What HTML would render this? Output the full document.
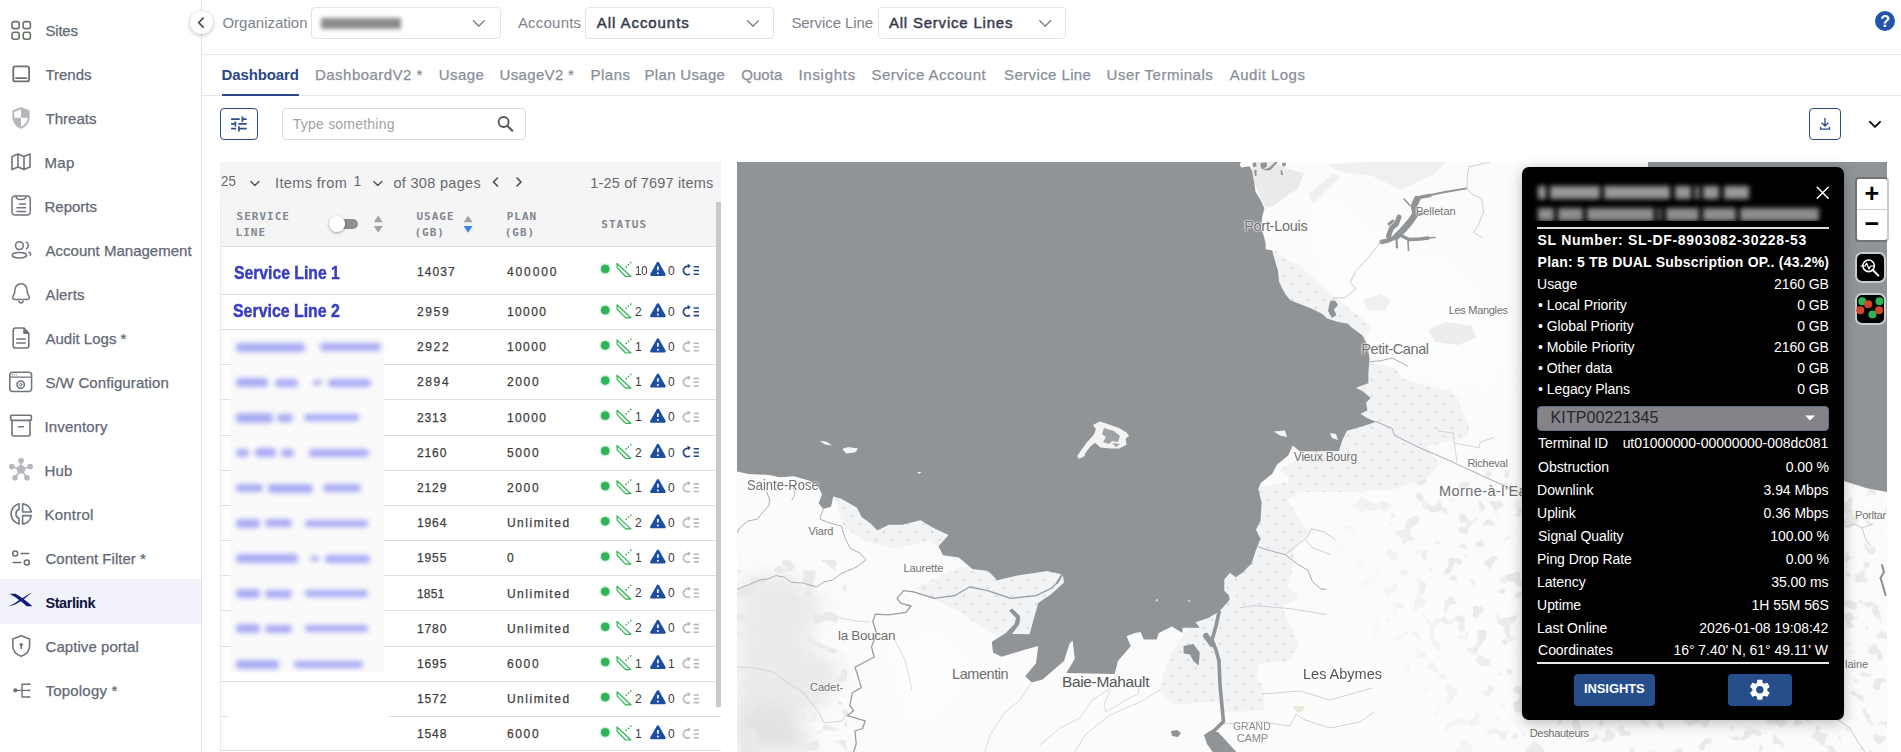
<!DOCTYPE html><html lang="en"><head><meta charset="utf-8"><title>Starlink Dashboard</title><style>
html,body{margin:0;padding:0}
body{width:1901px;height:752px;overflow:hidden;background:#fff;position:relative;font-family:"Liberation Sans",sans-serif}
.abs{position:absolute}
.t{position:absolute;white-space:nowrap}
.bx{position:absolute;box-sizing:border-box}
.map{position:absolute;left:737px;top:162px}
.m{-webkit-text-stroke:.25px currentColor}
.m2{-webkit-text-stroke:.45px currentColor}
.blur{position:absolute;white-space:nowrap;filter:blur(2.6px)}
</style></head><body>
<div class="bx" style="left:0.0px;top:579.2px;width:201.0px;height:44.4px;background:#f1f2f9"></div>
<div class="bx" style="left:201.0px;top:0.0px;width:1.0px;height:752.0px;background:#e4e4e8"></div>
<svg class="abs" style="left:0;top:0" width="60" height="752" viewBox="0 0 60 752" fill="none" stroke-linecap="round" stroke-linejoin="round"><rect x="12.0" y="21.6" width="7.2" height="7" rx="2.2" stroke="#6a7269" stroke-width="1.6"/><rect x="23.2" y="21.6" width="7.2" height="7" rx="2.2" stroke="#6a7269" stroke-width="1.6"/><rect x="12.0" y="32.2" width="7.2" height="7" rx="2.2" stroke="#6a7269" stroke-width="1.6"/><rect x="23.2" y="32.2" width="7.2" height="7" rx="2.2" stroke="#6a7269" stroke-width="1.6"/><rect x="13.3" y="66.4" width="15.8" height="15" rx="2" stroke="#6a7269" stroke-width="1.8"/><path d="M16 78.2h10.4" stroke="#6a7269" stroke-width="1.8"/><path d="M21 107l8.6 3.6v6.2c0 5.6-3.6 10.4-8.6 12-5-1.6-8.6-6.4-8.6-12v-6.2z" fill="#b5b7bd"/><path d="M21 109.2v8.6h-6.7v-5.8zM21 117.8h6.7c-.5 4-3 7.4-6.7 8.8z" fill="#fff"/><path d="M12 156.5l6-2.5 6 2.5 6-2.5v13l-6 2.5-6-2.5-6 2.5zM18 154v13M24 156.5v13" stroke="#70747d" stroke-width="1.6"/><path d="M16 196h-1.2a2.8 2.8 0 0 0-2.8 2.8v13.4a2.8 2.8 0 0 0 2.8 2.8h12.6a2.8 2.8 0 0 0 2.8-2.8v-13.4a2.8 2.8 0 0 0-2.8-2.8H26c0 2.4-2 3.6-5 3.6s-5-1.200-5-3.600zM16.500 196h9M19.500 204h6M17 207.800h8.500M17 211.600h8.500" stroke="#70747d" stroke-width="1.5"/><circle cx="19.4" cy="245.600" r="3.900" stroke="#70747d" stroke-width="1.500"/><ellipse cx="19.400" cy="255.200" rx="7.200" ry="2.700" stroke="#70747d" stroke-width="1.500"/><path d="M26.200 242.300c2.400.500 3.200 4.200.400 6.300M29 252.300c1.400.500 2 1.500 1.200 2.800" stroke="#70747d" stroke-width="1.500"/><path d="M21 283.800c-3.600 0-6 2.800-6 6.200 0 4-2.200 5.400-2.200 7.400 0 1.200 1 2 2.400 2h11.600c1.400 0 2.400-.800 2.400-2 0-2-2.200-3.400-2.200-7.400 0-3.400-2.400-6.200-6-6.200zM18.800 301.400c.5 1 1.200 1.500 2.200 1.500s1.700-.5 2.200-1.500" stroke="#70747d" stroke-width="1.500"/><path d="M24 328h-8.600a2.200 2.200 0 0 0-2.200 2.200v15.600a2.200 2.200 0 0 0 2.200 2.200h11.200a2.200 2.200 0 0 0 2.200-2.200V333.200zM24 328v5.200h4.800M16.800 339h8.400M16.800 343h8.400" stroke="#70747d" stroke-width="1.600"/><path d="M24 328l4.800 5.200H24z" fill="#70747d"/><rect x="9.800" y="372.200" width="21.800" height="19.400" rx="3" stroke="#70747d" stroke-width="1.500"/><path d="M9.800 377.200h21.800" stroke="#70747d" stroke-width="1.200"/><circle cx="20.700" cy="384.600" r="3.700" stroke="#70747d" stroke-width="1.500" stroke-dasharray="1.900 1"/><circle cx="20.700" cy="384.600" r="1.300" stroke="#70747d" stroke-width="1"/><path d="M12.500 374.700h.1M14.500 374.700h.1M16.500 374.700h.1" stroke="#70747d" stroke-width="1.100"/><rect x="10.600" y="415.200" width="20.800" height="5.200" rx="1.200" stroke="#70747d" stroke-width="1.600"/><path d="M12 420.400v13.600a2 2 0 0 0 2 2h14a2 2 0 0 0 2-2v-13.600M18.600 426.800h4.800" stroke="#70747d" stroke-width="1.600"/><g fill="#b5b7bd" stroke="#b5b7bd" stroke-width="1.600"><path d="M21 469.500V461M21 469.500l-9-3M21 469.500l9-3M21 469.500l-5.800 8M21 469.500l5.800 8"/><circle cx="21" cy="469.500" r="4.200" stroke="none"/><circle cx="21" cy="460.800" r="2.800" stroke="none"/><circle cx="11.800" cy="466.600" r="2.800" stroke="none"/><circle cx="30.200" cy="466.600" r="2.800" stroke="none"/><circle cx="15" cy="477.800" r="2.800" stroke="none"/><circle cx="27" cy="477.800" r="2.800" stroke="none"/></g><path d="M19 503.800a10.400 10.400 0 0 0 0 20.200v-5.500a5 5 0 0 1 0-9.200zM22.600 503.700v8.300h8.600a10.300 10.300 0 0 0-8.600-8.300zM22.600 515.600v8.500a10.300 10.300 0 0 0 8.600-8.500z" stroke="#70747d" stroke-width="1.600"/><circle cx="15.200" cy="553.400" r="2.500" stroke="#6a7269" stroke-width="1.500"/><path d="M21.200 553.400h7.600M13.200 562.400h7.600" stroke="#6a7269" stroke-width="1.500"/><circle cx="26.800" cy="562.400" r="2.500" stroke="#6a7269" stroke-width="1.500"/><path d="M9.600 593.800h5.800c4.600 2.200 11.600 7.700 16.900 12.400h-5.700c-4.600-4.200-11.600-9.700-17-12.400z" fill="#0e1a78"/><path d="M9.100 606.200c5.900-2.700 13.900-9.200 22.700-13.800-5.800 5.100-13.800 12.100-22.700 13.800z" fill="#0e1a78"/><path d="M21.200 635.800l8.400 3.200v6.400c0 5.200-3.400 9-8.400 10.800-5-1.800-8.400-5.600-8.400-10.800V639z" stroke="#70747d" stroke-width="1.600"/><circle cx="21.200" cy="644.600" r="1.700" fill="#70747d"/><path d="M21.200 645v3.800" stroke="#70747d" stroke-width="1.600"/><circle cx="15.300" cy="690.400" r="2.100" fill="#70747d"/><path d="M17 690.400h11.500M22 684.200v12.800h6.500M22 684.200h6.500" stroke="#70747d" stroke-width="1.400"/><circle cx="29.200" cy="684.200" r="1.100" fill="#70747d"/><circle cx="29.200" cy="690.400" r="1.100" fill="#70747d"/><circle cx="29.200" cy="697" r="1.100" fill="#70747d"/></svg>
<div class="bx" style="left:202.0px;top:54.0px;width:1699.0px;height:1.0px;background:#e6e6ea"></div>
<div class="bx" style="left:202.0px;top:95.0px;width:1699.0px;height:1.0px;background:#e6e6ea"></div>
<div class="bx" style="left:222.4px;top:94.0px;width:76.5px;height:2.0px;background:#2a4686"></div>
<div class="bx" style="left:311.2px;top:7.0px;width:189.4px;height:32.0px;border:1px solid #e3e3e7;border-radius:4px;background:#fff"></div>
<div class="bx" style="left:585.4px;top:7.0px;width:188.9px;height:32.0px;border:1px solid #e3e3e7;border-radius:4px;background:#fff"></div>
<div class="bx" style="left:877.6px;top:7.0px;width:188.9px;height:32.0px;border:1px solid #e3e3e7;border-radius:4px;background:#fff"></div>
<div class="abs" style="left:321px;top:17.500px;width:80px;height:11px;background:#8a8a8a;filter:blur(2.200px)"></div>
<div class="bx" style="left:190.0px;top:11.2px;width:23.0px;height:23.0px;border-radius:50%;background:#fff;box-shadow:0 1px 4px rgba(0,0,0,.28)"></div>
<div class="bx" style="left:1875.1px;top:11.1px;width:20.0px;height:20.0px;border-radius:50%;background:#2356a8"></div>
<span class="t" style="left:1880.2px;top:11.6px;font-size:16px;line-height:19px;font-weight:700;color:#fff">?</span>
<div class="bx" style="left:219.9px;top:108.4px;width:37.9px;height:31.3px;border:1px solid #2a4a8a;border-radius:4px"></div>
<div class="bx" style="left:282.4px;top:108.4px;width:243.4px;height:31.3px;border:1px solid #dedee2;border-radius:4px"></div>
<div class="bx" style="left:1809.2px;top:108.3px;width:31.6px;height:31.7px;border:1px solid #2a4a8a;border-radius:4px"></div>
<div class="bx" style="left:220.0px;top:162.0px;width:501.0px;height:41.2px;background:#f5f5f5"></div>
<div class="bx" style="left:220.0px;top:203.2px;width:496.0px;height:43.3px;background:#f5f5f5"></div>
<div class="bx" style="left:716.0px;top:202.0px;width:5.0px;height:505.4px;background:#c9c9c9"></div>
<div class="bx" style="left:220.0px;top:203.0px;width:1.0px;height:549.0px;background:#e9e9e9"></div>
<div class="bx" style="left:220.0px;top:246.0px;width:496.0px;height:1.0px;background:#dfdfdf"></div>
<div class="bx" style="left:220.0px;top:294.0px;width:496.0px;height:1.0px;background:#dfdfdf"></div>
<div class="bx" style="left:220.0px;top:329.0px;width:496.0px;height:1.0px;background:#dfdfdf"></div>
<div class="bx" style="left:220.0px;top:364.0px;width:496.0px;height:1.0px;background:#dfdfdf"></div>
<div class="bx" style="left:220.0px;top:399.0px;width:496.0px;height:1.0px;background:#dfdfdf"></div>
<div class="bx" style="left:220.0px;top:435.0px;width:496.0px;height:1.0px;background:#dfdfdf"></div>
<div class="bx" style="left:220.0px;top:470.0px;width:496.0px;height:1.0px;background:#dfdfdf"></div>
<div class="bx" style="left:220.0px;top:505.0px;width:496.0px;height:1.0px;background:#dfdfdf"></div>
<div class="bx" style="left:220.0px;top:540.0px;width:496.0px;height:1.0px;background:#dfdfdf"></div>
<div class="bx" style="left:220.0px;top:575.0px;width:496.0px;height:1.0px;background:#dfdfdf"></div>
<div class="bx" style="left:220.0px;top:610.0px;width:496.0px;height:1.0px;background:#dfdfdf"></div>
<div class="bx" style="left:220.0px;top:646.0px;width:496.0px;height:1.0px;background:#dfdfdf"></div>
<div class="bx" style="left:220.0px;top:681.0px;width:496.0px;height:1.0px;background:#dfdfdf"></div>
<div class="bx" style="left:220.0px;top:716.0px;width:501.0px;height:1.0px;background:#dfdfdf"></div>
<div class="bx" style="left:220.0px;top:750.0px;width:501.0px;height:1.0px;background:#dfdfdf"></div>
<div class="bx" style="left:231.0px;top:337.0px;width:153.0px;height:335.4px;background:#fafafa"></div>
<div class="bx" style="left:228.6px;top:682.5px;width:160.0px;height:67.0px;background:#fff"></div>
<div class="abs" style="left:236.0px;top:342.9px;width:69.4px;height:9px;background:#a9abf5;filter:blur(2.8px);border-radius:4px"></div>
<div class="abs" style="left:319.9px;top:343.4px;width:60.7px;height:8px;background:#a9abf5;filter:blur(2.8px);border-radius:4px"></div>
<div class="abs" style="left:236.0px;top:378.1px;width:32.3px;height:9px;background:#a9abf5;filter:blur(2.8px);border-radius:4px"></div>
<div class="abs" style="left:275.0px;top:378.6px;width:22.9px;height:8px;background:#a9abf5;filter:blur(2.8px);border-radius:4px"></div>
<div class="abs" style="left:312.7px;top:380.1px;width:9.4px;height:5px;background:#a9abf5;filter:blur(2.8px);border-radius:4px"></div>
<div class="abs" style="left:327.5px;top:378.6px;width:43.1px;height:8px;background:#a9abf5;filter:blur(2.8px);border-radius:4px"></div>
<div class="abs" style="left:236.0px;top:412.7px;width:36.8px;height:10px;background:#a9abf5;filter:blur(2.8px);border-radius:4px"></div>
<div class="abs" style="left:276.5px;top:413.7px;width:16.0px;height:8px;background:#a9abf5;filter:blur(2.8px);border-radius:4px"></div>
<div class="abs" style="left:303.5px;top:414.2px;width:55.2px;height:7px;background:#a9abf5;filter:blur(2.8px);border-radius:4px"></div>
<div class="abs" style="left:236.0px;top:448.9px;width:13.3px;height:8px;background:#a9abf5;filter:blur(2.8px);border-radius:4px"></div>
<div class="abs" style="left:254.6px;top:448.4px;width:21.2px;height:9px;background:#a9abf5;filter:blur(2.8px);border-radius:4px"></div>
<div class="abs" style="left:281.1px;top:448.9px;width:13.3px;height:8px;background:#a9abf5;filter:blur(2.8px);border-radius:4px"></div>
<div class="abs" style="left:308.9px;top:448.9px;width:59.7px;height:8px;background:#a9abf5;filter:blur(2.8px);border-radius:4px"></div>
<div class="abs" style="left:236.0px;top:484.1px;width:27.4px;height:8px;background:#a9abf5;filter:blur(2.8px);border-radius:4px"></div>
<div class="abs" style="left:268.4px;top:483.6px;width:44.9px;height:9px;background:#a9abf5;filter:blur(2.8px);border-radius:4px"></div>
<div class="abs" style="left:323.2px;top:484.1px;width:37.4px;height:8px;background:#a9abf5;filter:blur(2.8px);border-radius:4px"></div>
<div class="abs" style="left:236.0px;top:518.8px;width:23.8px;height:9px;background:#a9abf5;filter:blur(2.8px);border-radius:4px"></div>
<div class="abs" style="left:265.1px;top:519.3px;width:26.5px;height:8px;background:#a9abf5;filter:blur(2.8px);border-radius:4px"></div>
<div class="abs" style="left:304.8px;top:519.8px;width:63.6px;height:7px;background:#a9abf5;filter:blur(2.8px);border-radius:4px"></div>
<div class="abs" style="left:236.0px;top:554.0px;width:61.8px;height:9px;background:#a9abf5;filter:blur(2.8px);border-radius:4px"></div>
<div class="abs" style="left:309.9px;top:556.0px;width:9.4px;height:5px;background:#a9abf5;filter:blur(2.8px);border-radius:4px"></div>
<div class="abs" style="left:324.6px;top:554.5px;width:45.7px;height:8px;background:#a9abf5;filter:blur(2.8px);border-radius:4px"></div>
<div class="abs" style="left:236.0px;top:589.1px;width:23.8px;height:9px;background:#a9abf5;filter:blur(2.8px);border-radius:4px"></div>
<div class="abs" style="left:265.1px;top:589.6px;width:26.5px;height:8px;background:#a9abf5;filter:blur(2.8px);border-radius:4px"></div>
<div class="abs" style="left:304.8px;top:590.1px;width:63.6px;height:7px;background:#a9abf5;filter:blur(2.8px);border-radius:4px"></div>
<div class="abs" style="left:236.0px;top:624.3px;width:23.8px;height:9px;background:#a9abf5;filter:blur(2.8px);border-radius:4px"></div>
<div class="abs" style="left:265.1px;top:624.8px;width:26.5px;height:8px;background:#a9abf5;filter:blur(2.8px);border-radius:4px"></div>
<div class="abs" style="left:304.8px;top:625.3px;width:63.6px;height:7px;background:#a9abf5;filter:blur(2.8px);border-radius:4px"></div>
<div class="abs" style="left:236.0px;top:659.5px;width:43.0px;height:9px;background:#a9abf5;filter:blur(2.8px);border-radius:4px"></div>
<div class="abs" style="left:294.2px;top:660.5px;width:68.4px;height:7px;background:#a9abf5;filter:blur(2.8px);border-radius:4px"></div>
<div class="bx" style="left:336.0px;top:219.2px;width:22.0px;height:10.0px;background:#8e8e8e;border-radius:5px"></div>
<div class="bx" style="left:329.0px;top:216.4px;width:15.6px;height:15.6px;background:#fff;border-radius:50%;box-shadow:0 1px 3px rgba(0,0,0,.35)"></div>
<svg class="abs" style="left:0;top:0" width="1901" height="752" viewBox="0 0 1901 752"><defs><filter id="glow" x="-100%" y="-100%" width="300%" height="300%"><feGaussianBlur in="SourceGraphic" stdDeviation="1.3" result="b"/><feMerge><feMergeNode in="b"/><feMergeNode in="SourceGraphic"/></feMerge></filter></defs><path d="M203.2 18.2l-4.5 4.5l4.5 4.5" fill="none" stroke="#555" stroke-width="1.8" stroke-linecap="round" stroke-linejoin="round"/><path d="M473.3 20.6l5.5 5.5l5.5 -5.5" fill="none" stroke="#666" stroke-width="1.2" stroke-linecap="round" stroke-linejoin="round"/><path d="M747.5 20.6l5.5 5.5l5.5 -5.5" fill="none" stroke="#666" stroke-width="1.2" stroke-linecap="round" stroke-linejoin="round"/><path d="M1039.7 20.6l5.5 5.5l5.5 -5.5" fill="none" stroke="#666" stroke-width="1.2" stroke-linecap="round" stroke-linejoin="round"/><path d="M1870.0 121.9l5.0 5.0l5.0 -5.0" fill="none" stroke="#111" stroke-width="2" stroke-linecap="round" stroke-linejoin="round"/><path d="M250.9 181.5l4.0 4.0l4.0 -4.0" fill="none" stroke="#555" stroke-width="1.4" stroke-linecap="round" stroke-linejoin="round"/><path d="M373.8 181.5l4.0 4.0l4.0 -4.0" fill="none" stroke="#555" stroke-width="1.4" stroke-linecap="round" stroke-linejoin="round"/><path d="M497.5 178.0l-4.0 4.0l4.0 4.0" fill="none" stroke="#444" stroke-width="1.5" stroke-linecap="round" stroke-linejoin="round"/><path d="M517.0 178.0l4.0 4.0l-4.0 4.0" fill="none" stroke="#444" stroke-width="1.5" stroke-linecap="round" stroke-linejoin="round"/><path d="M231.100 119.100H239.700M242.400 116.400V121.900M242.400 119.100H246.700M231.100 123.900H235.400M235.400 121.400V126.400M238.400 123.900H246.700M231.100 128.700H236.100M238.900 126.200V131.400M238.900 128.700H246.700" stroke="#2f4f8f" stroke-width="1.700" fill="none"/><circle cx="503.600" cy="122" r="5" fill="none" stroke="#555" stroke-width="1.800"/><path d="M507.300 125.800l5 5" stroke="#555" stroke-width="2" stroke-linecap="round"/><path d="M1825 118.500v7M1822 123l3 3 3-3M1820.500 127.500v1.700h9v-1.700" stroke="#2a4a8a" stroke-width="1.300" fill="none" stroke-linecap="round" stroke-linejoin="round"/><path d="M373.7 222.300l4.500-6.800 4.500 6.800z" fill="#a3a3a3"/><path d="M373.7 226l4.500 6.800 4.500-6.800z" fill="#a3a3a3"/><path d="M463.6 222.300l4.500-6.800 4.500 6.800z" fill="#a3a3a3"/><path d="M463.6 226l4.500 6.800 4.500-6.800z" fill="#3c82f0"/><circle cx="605.2" cy="268.9" r="4.1" fill="#2fb356" filter="url(#glow)"/><path d="M617 263.5l.2 4.400 8.400 8.600h5.300z" fill="#f4fbf6" stroke="#2fb356" stroke-width="1.200" stroke-linejoin="round"/><path d="M625.700 267.4l6.700-6.100" stroke="#2fb356" stroke-width="1.500" stroke-dasharray="1.500 1.550"/><path d="M657.900 263.2l6.500 11.400h-13z" fill="#1d4ea0" stroke="#1d4ea0" stroke-width="2.600" stroke-linejoin="round"/><path d="M657.900 266.6v3.600" stroke="#fff" stroke-width="1.700"/><circle cx="657.900" cy="273.2" r="1" fill="#fff"/><path d="M690 273.9a4.200 4.200 0 1 1-1.200-7.400" fill="none" stroke="#27498a" stroke-width="1.700"/><path d="M687.400 263.5l3.500 2.200-2.700 2.600z" fill="#27498a"/><path d="M693.600 266.7h5.400M693.600 270.5h5.400M693.600 274.3h5.400" stroke="#27498a" stroke-width="1.600"/><circle cx="605.2" cy="310.2" r="4.1" fill="#2fb356" filter="url(#glow)"/><path d="M617 304.8l.2 4.400 8.400 8.600h5.300z" fill="#f4fbf6" stroke="#2fb356" stroke-width="1.200" stroke-linejoin="round"/><path d="M625.700 308.7l6.700-6.100" stroke="#2fb356" stroke-width="1.500" stroke-dasharray="1.500 1.550"/><path d="M657.900 304.5l6.500 11.400h-13z" fill="#1d4ea0" stroke="#1d4ea0" stroke-width="2.600" stroke-linejoin="round"/><path d="M657.900 307.9v3.600" stroke="#fff" stroke-width="1.700"/><circle cx="657.900" cy="314.5" r="1" fill="#fff"/><path d="M690 315.2a4.200 4.200 0 1 1-1.200-7.400" fill="none" stroke="#27498a" stroke-width="1.700"/><path d="M687.400 304.8l3.500 2.200-2.700 2.600z" fill="#27498a"/><path d="M693.600 308.0h5.400M693.600 311.8h5.400M693.600 315.6h5.400" stroke="#27498a" stroke-width="1.600"/><circle cx="605.2" cy="345.4" r="4.1" fill="#2fb356" filter="url(#glow)"/><path d="M617 340.0l.2 4.400 8.400 8.600h5.300z" fill="#f4fbf6" stroke="#2fb356" stroke-width="1.200" stroke-linejoin="round"/><path d="M625.700 343.9l6.700-6.100" stroke="#2fb356" stroke-width="1.500" stroke-dasharray="1.500 1.550"/><path d="M657.900 339.7l6.500 11.400h-13z" fill="#1d4ea0" stroke="#1d4ea0" stroke-width="2.600" stroke-linejoin="round"/><path d="M657.900 343.1v3.600" stroke="#fff" stroke-width="1.700"/><circle cx="657.900" cy="349.7" r="1" fill="#fff"/><path d="M690 350.4a4.200 4.200 0 1 1-1.200-7.400" fill="none" stroke="#b9b9b9" stroke-width="1.700"/><path d="M687.400 340.0l3.500 2.200-2.700 2.600z" fill="#b9b9b9"/><path d="M693.600 343.2h5.400M693.600 347.0h5.400M693.600 350.8h5.400" stroke="#b9b9b9" stroke-width="1.600"/><circle cx="605.2" cy="380.6" r="4.1" fill="#2fb356" filter="url(#glow)"/><path d="M617 375.2l.2 4.400 8.400 8.600h5.300z" fill="#f4fbf6" stroke="#2fb356" stroke-width="1.200" stroke-linejoin="round"/><path d="M625.700 379.1l6.700-6.100" stroke="#2fb356" stroke-width="1.500" stroke-dasharray="1.500 1.550"/><path d="M657.900 374.9l6.500 11.400h-13z" fill="#1d4ea0" stroke="#1d4ea0" stroke-width="2.600" stroke-linejoin="round"/><path d="M657.900 378.2v3.600" stroke="#fff" stroke-width="1.700"/><circle cx="657.900" cy="384.9" r="1" fill="#fff"/><path d="M690 385.6a4.200 4.200 0 1 1-1.200-7.400" fill="none" stroke="#b9b9b9" stroke-width="1.700"/><path d="M687.400 375.2l3.500 2.200-2.700 2.600z" fill="#b9b9b9"/><path d="M693.600 378.4h5.400M693.600 382.2h5.400M693.600 386.0h5.400" stroke="#b9b9b9" stroke-width="1.600"/><circle cx="605.2" cy="415.7" r="4.1" fill="#2fb356" filter="url(#glow)"/><path d="M617 410.3l.2 4.400 8.400 8.600h5.300z" fill="#f4fbf6" stroke="#2fb356" stroke-width="1.200" stroke-linejoin="round"/><path d="M625.700 414.2l6.700-6.100" stroke="#2fb356" stroke-width="1.500" stroke-dasharray="1.500 1.550"/><path d="M657.900 410.0l6.500 11.400h-13z" fill="#1d4ea0" stroke="#1d4ea0" stroke-width="2.600" stroke-linejoin="round"/><path d="M657.900 413.4v3.600" stroke="#fff" stroke-width="1.700"/><circle cx="657.900" cy="420.0" r="1" fill="#fff"/><path d="M690 420.7a4.200 4.200 0 1 1-1.200-7.400" fill="none" stroke="#b9b9b9" stroke-width="1.700"/><path d="M687.400 410.3l3.500 2.200-2.700 2.600z" fill="#b9b9b9"/><path d="M693.600 413.5h5.400M693.600 417.3h5.400M693.600 421.1h5.400" stroke="#b9b9b9" stroke-width="1.600"/><circle cx="605.2" cy="450.9" r="4.1" fill="#2fb356" filter="url(#glow)"/><path d="M617 445.5l.2 4.400 8.400 8.600h5.300z" fill="#f4fbf6" stroke="#2fb356" stroke-width="1.200" stroke-linejoin="round"/><path d="M625.700 449.4l6.700-6.100" stroke="#2fb356" stroke-width="1.500" stroke-dasharray="1.500 1.550"/><path d="M657.900 445.2l6.500 11.400h-13z" fill="#1d4ea0" stroke="#1d4ea0" stroke-width="2.600" stroke-linejoin="round"/><path d="M657.900 448.6v3.600" stroke="#fff" stroke-width="1.700"/><circle cx="657.900" cy="455.2" r="1" fill="#fff"/><path d="M690 455.9a4.200 4.200 0 1 1-1.200-7.400" fill="none" stroke="#27498a" stroke-width="1.700"/><path d="M687.400 445.5l3.500 2.200-2.700 2.600z" fill="#27498a"/><path d="M693.600 448.7h5.400M693.600 452.5h5.400M693.600 456.3h5.400" stroke="#27498a" stroke-width="1.600"/><circle cx="605.2" cy="486.1" r="4.1" fill="#2fb356" filter="url(#glow)"/><path d="M617 480.7l.2 4.400 8.400 8.600h5.300z" fill="#f4fbf6" stroke="#2fb356" stroke-width="1.200" stroke-linejoin="round"/><path d="M625.700 484.6l6.700-6.100" stroke="#2fb356" stroke-width="1.500" stroke-dasharray="1.500 1.550"/><path d="M657.900 480.4l6.500 11.400h-13z" fill="#1d4ea0" stroke="#1d4ea0" stroke-width="2.600" stroke-linejoin="round"/><path d="M657.900 483.8v3.600" stroke="#fff" stroke-width="1.700"/><circle cx="657.900" cy="490.4" r="1" fill="#fff"/><path d="M690 491.1a4.200 4.200 0 1 1-1.200-7.400" fill="none" stroke="#b9b9b9" stroke-width="1.700"/><path d="M687.400 480.7l3.500 2.200-2.700 2.600z" fill="#b9b9b9"/><path d="M693.600 483.9h5.400M693.600 487.7h5.400M693.600 491.5h5.400" stroke="#b9b9b9" stroke-width="1.600"/><circle cx="605.2" cy="521.3" r="4.1" fill="#2fb356" filter="url(#glow)"/><path d="M617 515.9l.2 4.400 8.400 8.600h5.300z" fill="#f4fbf6" stroke="#2fb356" stroke-width="1.200" stroke-linejoin="round"/><path d="M625.700 519.8l6.700-6.100" stroke="#2fb356" stroke-width="1.500" stroke-dasharray="1.500 1.550"/><path d="M657.900 515.6l6.500 11.400h-13z" fill="#1d4ea0" stroke="#1d4ea0" stroke-width="2.600" stroke-linejoin="round"/><path d="M657.900 519.0v3.600" stroke="#fff" stroke-width="1.700"/><circle cx="657.900" cy="525.6" r="1" fill="#fff"/><path d="M690 526.3a4.200 4.200 0 1 1-1.200-7.400" fill="none" stroke="#b9b9b9" stroke-width="1.700"/><path d="M687.400 515.9l3.500 2.200-2.700 2.600z" fill="#b9b9b9"/><path d="M693.600 519.1h5.400M693.600 522.9h5.400M693.600 526.7h5.400" stroke="#b9b9b9" stroke-width="1.600"/><circle cx="605.2" cy="556.5" r="4.1" fill="#2fb356" filter="url(#glow)"/><path d="M617 551.1l.2 4.400 8.400 8.600h5.300z" fill="#f4fbf6" stroke="#2fb356" stroke-width="1.200" stroke-linejoin="round"/><path d="M625.700 555.0l6.700-6.100" stroke="#2fb356" stroke-width="1.500" stroke-dasharray="1.500 1.550"/><path d="M657.900 550.8l6.500 11.400h-13z" fill="#1d4ea0" stroke="#1d4ea0" stroke-width="2.600" stroke-linejoin="round"/><path d="M657.900 554.2v3.600" stroke="#fff" stroke-width="1.700"/><circle cx="657.900" cy="560.8" r="1" fill="#fff"/><path d="M690 561.5a4.200 4.200 0 1 1-1.200-7.400" fill="none" stroke="#b9b9b9" stroke-width="1.700"/><path d="M687.400 551.1l3.500 2.200-2.700 2.600z" fill="#b9b9b9"/><path d="M693.600 554.3h5.400M693.600 558.1h5.400M693.600 561.9h5.400" stroke="#b9b9b9" stroke-width="1.600"/><circle cx="605.2" cy="591.6" r="4.1" fill="#2fb356" filter="url(#glow)"/><path d="M617 586.2l.2 4.400 8.400 8.600h5.300z" fill="#f4fbf6" stroke="#2fb356" stroke-width="1.200" stroke-linejoin="round"/><path d="M625.700 590.1l6.700-6.100" stroke="#2fb356" stroke-width="1.500" stroke-dasharray="1.500 1.550"/><path d="M657.900 585.9l6.500 11.400h-13z" fill="#1d4ea0" stroke="#1d4ea0" stroke-width="2.600" stroke-linejoin="round"/><path d="M657.900 589.3v3.600" stroke="#fff" stroke-width="1.700"/><circle cx="657.900" cy="595.9" r="1" fill="#fff"/><path d="M690 596.6a4.200 4.200 0 1 1-1.200-7.400" fill="none" stroke="#b9b9b9" stroke-width="1.700"/><path d="M687.400 586.2l3.500 2.200-2.700 2.600z" fill="#b9b9b9"/><path d="M693.600 589.4h5.400M693.600 593.2h5.400M693.600 597.0h5.400" stroke="#b9b9b9" stroke-width="1.600"/><circle cx="605.2" cy="626.8" r="4.1" fill="#2fb356" filter="url(#glow)"/><path d="M617 621.4l.2 4.400 8.400 8.600h5.300z" fill="#f4fbf6" stroke="#2fb356" stroke-width="1.200" stroke-linejoin="round"/><path d="M625.700 625.3l6.700-6.100" stroke="#2fb356" stroke-width="1.500" stroke-dasharray="1.500 1.550"/><path d="M657.900 621.1l6.500 11.400h-13z" fill="#1d4ea0" stroke="#1d4ea0" stroke-width="2.600" stroke-linejoin="round"/><path d="M657.900 624.5v3.600" stroke="#fff" stroke-width="1.700"/><circle cx="657.900" cy="631.1" r="1" fill="#fff"/><path d="M690 631.8a4.200 4.200 0 1 1-1.200-7.400" fill="none" stroke="#b9b9b9" stroke-width="1.700"/><path d="M687.400 621.4l3.500 2.200-2.700 2.600z" fill="#b9b9b9"/><path d="M693.600 624.6h5.400M693.600 628.4h5.400M693.600 632.2h5.400" stroke="#b9b9b9" stroke-width="1.600"/><circle cx="605.2" cy="662.0" r="4.1" fill="#2fb356" filter="url(#glow)"/><path d="M617 656.6l.2 4.400 8.400 8.600h5.300z" fill="#f4fbf6" stroke="#2fb356" stroke-width="1.200" stroke-linejoin="round"/><path d="M625.700 660.5l6.700-6.100" stroke="#2fb356" stroke-width="1.500" stroke-dasharray="1.500 1.550"/><path d="M657.900 656.3l6.500 11.400h-13z" fill="#1d4ea0" stroke="#1d4ea0" stroke-width="2.600" stroke-linejoin="round"/><path d="M657.900 659.7v3.600" stroke="#fff" stroke-width="1.700"/><circle cx="657.900" cy="666.3" r="1" fill="#fff"/><path d="M690 667.0a4.200 4.200 0 1 1-1.200-7.400" fill="none" stroke="#b9b9b9" stroke-width="1.700"/><path d="M687.400 656.6l3.500 2.200-2.700 2.600z" fill="#b9b9b9"/><path d="M693.600 659.8h5.400M693.600 663.6h5.400M693.600 667.4h5.400" stroke="#b9b9b9" stroke-width="1.600"/><circle cx="605.2" cy="697.2" r="4.1" fill="#2fb356" filter="url(#glow)"/><path d="M617 691.8l.2 4.400 8.400 8.600h5.300z" fill="#f4fbf6" stroke="#2fb356" stroke-width="1.200" stroke-linejoin="round"/><path d="M625.700 695.7l6.700-6.100" stroke="#2fb356" stroke-width="1.500" stroke-dasharray="1.500 1.550"/><path d="M657.900 691.5l6.500 11.400h-13z" fill="#1d4ea0" stroke="#1d4ea0" stroke-width="2.600" stroke-linejoin="round"/><path d="M657.900 694.9v3.600" stroke="#fff" stroke-width="1.700"/><circle cx="657.900" cy="701.5" r="1" fill="#fff"/><path d="M690 702.2a4.200 4.200 0 1 1-1.200-7.400" fill="none" stroke="#b9b9b9" stroke-width="1.700"/><path d="M687.400 691.8l3.500 2.200-2.700 2.600z" fill="#b9b9b9"/><path d="M693.600 695.0h5.400M693.600 698.8h5.400M693.600 702.6h5.400" stroke="#b9b9b9" stroke-width="1.600"/><circle cx="605.2" cy="732.4" r="4.1" fill="#2fb356" filter="url(#glow)"/><path d="M617 727.0l.2 4.400 8.400 8.600h5.300z" fill="#f4fbf6" stroke="#2fb356" stroke-width="1.200" stroke-linejoin="round"/><path d="M625.700 730.9l6.700-6.100" stroke="#2fb356" stroke-width="1.500" stroke-dasharray="1.500 1.550"/><path d="M657.900 726.6l6.500 11.400h-13z" fill="#1d4ea0" stroke="#1d4ea0" stroke-width="2.600" stroke-linejoin="round"/><path d="M657.900 730.1v3.600" stroke="#fff" stroke-width="1.700"/><circle cx="657.900" cy="736.6" r="1" fill="#fff"/><path d="M690 737.4a4.200 4.200 0 1 1-1.200-7.400" fill="none" stroke="#b9b9b9" stroke-width="1.700"/><path d="M687.400 727.0l3.500 2.200-2.700 2.600z" fill="#b9b9b9"/><path d="M693.600 730.2h5.400M693.600 734.0h5.400M693.600 737.8h5.400" stroke="#b9b9b9" stroke-width="1.600"/></svg>
<svg class="map" viewBox="737 162 1150 590" width="1150" height="590">
<defs><pattern id="msh" width="16" height="16" patternUnits="userSpaceOnUse"><path d="M2 5l2-3 2 3zM10 13l2-3 2 3z" fill="#dcdee1"/></pattern><filter id="soft" x="-10%" y="-10%" width="120%" height="120%"><feGaussianBlur stdDeviation="9"/></filter><filter id="noise" x="0" y="0" width="100%" height="100%"><feTurbulence type="fractalNoise" baseFrequency="0.07" numOctaves="2" seed="7" result="n"/><feColorMatrix in="n" type="matrix" values="0 0 0 0 0  0 0 0 0 0  0 0 0 0 0  14 0 0 0 -8.300" result="a"/><feComposite in="SourceGraphic" in2="a" operator="in"/></filter><filter id="noise2" x="0" y="0" width="100%" height="100%"><feTurbulence type="fractalNoise" baseFrequency="0.05 0.08" numOctaves="2" seed="3" result="n"/><feColorMatrix in="n" type="matrix" values="0 0 0 0 0  0 0 0 0 0  0 0 0 0 0  12 0 0 0 -6.900" result="a"/><feComposite in="SourceGraphic" in2="a" operator="in"/></filter><linearGradient id="fg" gradientUnits="userSpaceOnUse" x1="1350" y1="610" x2="1450" y2="560"><stop offset="0" stop-color="#000"/><stop offset="1" stop-color="#fff"/></linearGradient><mask id="fade" maskUnits="userSpaceOnUse" x="1340" y="470" width="547" height="282"><rect x="1340" y="470" width="547" height="282" fill="url(#fg)"/></mask></defs>
<rect x="737" y="162" width="1150" height="590" fill="#fbfbfb"/>
<g filter="url(#soft)"><path d="M1300 200l40-12 30 40 90 30 60 80-20 60-120-20-60-60z" fill="#fdfdfd"/><path d="M1060 690l140-20 60 10 250-140 20 200H1000z" fill="#fcfcfc"/><path d="M737 580l50-8 40 30-20 40 40 30-30 40-40 10 30 30H737z" fill="#ebebeb"/><path d="M737 700l50 6 30 46H737z" fill="#e2e2e2"/><path d="M880 640l60-20 40 40-30 60-50 10z" fill="#fdfdfd"/></g><g mask="url(#fade)"><rect x="1340" y="470" width="547" height="282" fill="#eaeaea" filter="url(#noise)"/></g><rect x="737" y="560" width="110" height="192" fill="#e9e9e9" filter="url(#noise2)"/><polygon fill="#eaeaea" points="1253.1,162.0 1274.6,162.0 1288.2,169.0 1304.0,173.6 1297.2,189.4 1289.3,193.9 1274.6,205.2 1265.6,207.5 1261.0,198.4 1254.3,182.6 1251.5,172.4"/><polygon fill="#f0f0f0" points="1328.9,164.5 1367.3,162.0 1446.4,162.0 1435.1,173.6 1417.0,182.6 1401.2,189.4 1387.6,183.7 1371.8,175.8 1344.7,172.4 1333.4,169.0"/><polygon fill="#f0f0f0" points="1308.5,193.9 1333.4,173.6 1340.2,177.0 1313.0,204.0"/><polygon fill="#ededed" points="1428.0,330.0 1445.0,322.0 1472.0,326.0 1476.0,338.0 1458.0,345.0 1435.0,342.0"/><polygon fill="#f0f0f0" points="1363.0,300.0 1380.0,294.0 1391.0,300.0 1385.0,311.0 1368.0,310.0"/><polygon points="1274.6,250.0 1281.4,256.0 1299.5,266.0 1317.5,282.0 1333.4,295.6 1347.0,307.0 1362.8,318.2 1371.8,327.3 1365.0,338.0 1340.0,330.0 1310.0,315.0 1285.0,305.0 1270.0,282.0" fill="#f2f3f4"/><polygon points="1274.6,250.0 1281.4,256.0 1299.5,266.0 1317.5,282.0 1333.4,295.6 1347.0,307.0 1362.8,318.2 1371.8,327.3 1365.0,338.0 1340.0,330.0 1310.0,315.0 1285.0,305.0 1270.0,282.0" fill="url(#msh)"/><polygon points="1369.6,363.0 1394.4,367.5 1403.5,378.8 1426.0,385.6 1448.7,390.0 1455.5,394.6 1469.0,426.3 1466.8,437.6 1426.0,446.6 1439.6,464.7 1426.0,478.2 1390.0,490.0 1340.0,492.0 1300.0,492.0 1280.0,470.0 1330.0,440.0 1360.0,420.0 1360.0,383.0" fill="#f2f3f4"/><polygon points="1369.6,363.0 1394.4,367.5 1403.5,378.8 1426.0,385.6 1448.7,390.0 1455.5,394.6 1469.0,426.3 1466.8,437.6 1426.0,446.6 1439.6,464.7 1426.0,478.2 1390.0,490.0 1340.0,492.0 1300.0,492.0 1280.0,470.0 1330.0,440.0 1360.0,420.0 1360.0,383.0" fill="url(#msh)"/><polygon points="1299.0,480.0 1296.7,493.6 1287.6,500.3 1303.5,525.2 1310.2,532.0 1294.4,547.8 1292.2,570.4 1287.6,586.3 1299.0,597.5 1281.7,607.2 1299.0,643.9 1290.3,661.0 1260.0,663.3 1255.8,676.2 1264.4,690.0 1264.4,710.7 1223.5,712.0 1217.0,702.0 1174.0,704.2 1158.8,691.3 1167.5,661.0 1180.0,640.0 1200.0,615.0 1240.0,560.0 1250.0,489.0" fill="#f2f3f4"/><polygon points="1299.0,480.0 1296.7,493.6 1287.6,500.3 1303.5,525.2 1310.2,532.0 1294.4,547.8 1292.2,570.4 1287.6,586.3 1299.0,597.5 1281.7,607.2 1299.0,643.9 1290.3,661.0 1260.0,663.3 1255.8,676.2 1264.4,690.0 1264.4,710.7 1223.5,712.0 1217.0,702.0 1174.0,704.2 1158.8,691.3 1167.5,661.0 1180.0,640.0 1200.0,615.0 1240.0,560.0 1250.0,489.0" fill="url(#msh)"/><polygon points="915.0,588.0 961.0,566.6 990.5,570.0 1070.0,565.0 1060.0,598.2 1038.0,610.0 1040.0,634.0 1008.0,640.0 985.0,630.0 960.0,612.0 935.0,600.0" fill="#f2f3f4"/><polygon points="915.0,588.0 961.0,566.6 990.5,570.0 1070.0,565.0 1060.0,598.2 1038.0,610.0 1040.0,634.0 1008.0,640.0 985.0,630.0 960.0,612.0 935.0,600.0" fill="url(#msh)"/><polygon points="833.3,490.0 860.0,500.0 880.0,520.0 920.4,515.0 955.0,535.0 938.5,548.0 929.4,541.0 893.3,548.5 861.6,539.5 843.5,526.0 838.0,507.8" fill="#f2f3f4"/><polygon points="833.3,490.0 860.0,500.0 880.0,520.0 920.4,515.0 955.0,535.0 938.5,548.0 929.4,541.0 893.3,548.5 861.6,539.5 843.5,526.0 838.0,507.8" fill="url(#msh)"/>
<polygon fill="#909497" points="737.0,162.0 1240.8,162.0 1239.6,165.0 1241.5,167.5 1249.6,166.2 1252.4,172.0 1253.2,178.0 1254.3,182.6 1255.4,191.6 1261.0,200.7 1264.4,208.6 1262.2,216.5 1261.0,227.8 1264.4,238.0 1265.6,243.6 1265.6,249.3 1272.3,250.4 1274.6,259.5 1278.0,270.8 1279.1,282.0 1284.8,293.4 1290.4,300.2 1301.7,304.7 1313.0,309.2 1322.0,313.7 1326.6,318.2 1338.0,322.0 1347.0,323.4 1353.7,329.0 1362.8,335.8 1367.3,344.9 1369.6,358.4 1368.4,372.0 1368.4,383.3 1356.0,387.8 1362.8,391.2 1370.7,398.0 1366.2,402.5 1367.3,410.4 1360.5,413.8 1367.3,418.3 1376.3,421.7 1362.8,426.3 1347.0,430.8 1342.4,439.8 1339.0,451.0 1300.0,451.5 1292.7,445.5 1288.2,455.6 1276.9,464.7 1272.3,473.7 1261.0,482.8 1258.2,489.0 1261.6,502.6 1260.5,520.7 1256.0,529.7 1260.5,538.8 1256.0,550.0 1251.5,563.6 1242.4,572.7 1235.6,577.2 1230.0,572.7 1224.3,579.5 1224.3,590.8 1231.0,597.5 1227.8,602.0 1219.2,611.5 1208.4,618.0 1195.5,622.3 1199.8,627.7 1182.5,627.7 1182.5,633.0 1171.8,626.6 1158.8,633.0 1156.7,639.6 1143.8,639.6 1140.5,632.0 1135.0,633.0 1126.5,636.3 1130.8,646.0 1117.9,661.0 1114.7,674.0 1066.2,673.0 1074.8,659.0 1072.6,640.6 1069.4,643.9 1064.0,661.0 1042.5,679.4 1031.7,682.6 1025.2,676.2 1036.0,663.3 1038.2,646.0 1023.0,650.3 1001.5,656.8 993.0,652.5 991.8,641.7 1005.9,633.0 1014.5,624.0 1016.0,618.0 1009.0,610.5 1012.3,608.5 1020.0,616.0 1019.5,624.0 1012.0,634.0 1029.5,634.2 1031.7,626.6 1038.2,603.0 1051.5,594.0 1064.0,582.4 1062.8,574.5 1047.0,571.1 1017.6,575.6 997.2,580.2 988.2,571.1 972.4,568.9 958.8,557.6 943.0,555.3 938.5,546.3 948.6,535.0 934.0,528.2 920.4,520.3 902.3,524.8 888.7,524.8 877.4,530.4 870.6,523.6 861.6,516.9 857.0,507.8 841.3,498.8 833.3,496.5 831.0,506.7 823.2,509.0 818.6,503.3 822.0,494.3 818.6,487.5 809.6,480.7 793.8,476.2 780.2,477.3 769.0,475.0 748.6,473.9 737.0,471.6"/>
<polygon fill="#909497" points="1648.0,162.0 1887.0,162.0 1887.0,492.0 1866.0,488.0 1844.0,481.0 1700.0,470.0 1648.0,300.0"/>
<polygon fill="#f4f4f4" points="1093.0,425.1 1099.6,421.4 1107.0,423.7 1119.0,428.0 1126.6,432.6 1129.0,435.8 1125.6,439.0 1126.6,444.7 1119.0,448.4 1110.7,448.4 1100.5,447.5 1095.0,442.8 1090.3,446.5 1084.7,454.0 1084.7,455.9 1079.0,459.0 1077.2,455.9 1086.5,442.8 1094.0,434.4 1095.9,428.9"/>
<polyline points="1466.8,188.3 1445.0,192.0 1428.3,195.5" fill="none" stroke="#909497" stroke-width="1.8" stroke-linejoin="round" stroke-linecap="round" /><polyline points="1430.0,195.5 1421.0,197.0 1416.0,201.0" fill="none" stroke="#909497" stroke-width="3.5" stroke-linejoin="round" stroke-linecap="round" /><polyline points="1417.0,199.0 1414.0,206.0 1415.5,214.0 1410.0,222.0 1403.0,230.0 1396.0,237.0" fill="none" stroke="#909497" stroke-width="6.5" stroke-linejoin="round" stroke-linecap="round" /><polyline points="1396.0,237.0 1388.0,240.5 1381.5,242.0" fill="none" stroke="#909497" stroke-width="4.5" stroke-linejoin="round" stroke-linecap="round" /><polyline points="1399.0,217.0 1396.5,224.0 1391.5,228.0 1388.5,236.0" fill="none" stroke="#909497" stroke-width="5" stroke-linejoin="round" stroke-linecap="round" /><polyline points="1393.0,221.0 1389.0,224.0" fill="none" stroke="#909497" stroke-width="3" stroke-linejoin="round" stroke-linecap="round" /><polyline points="1404.0,199.0 1410.0,205.5" fill="none" stroke="#909497" stroke-width="1.4" stroke-linejoin="round" stroke-linecap="round" /><polyline points="1424.0,213.0 1418.0,215.0" fill="none" stroke="#909497" stroke-width="2.5" stroke-linejoin="round" stroke-linecap="round" /><polyline points="1402.0,236.0 1409.0,239.5 1420.0,239.0 1428.0,238.0" fill="none" stroke="#909497" stroke-width="3.6" stroke-linejoin="round" stroke-linecap="round" /><polyline points="1428.0,238.0 1435.0,237.5" fill="none" stroke="#909497" stroke-width="1.5" stroke-linejoin="round" stroke-linecap="round" /><polyline points="1396.5,240.0 1397.0,247.5" fill="none" stroke="#909497" stroke-width="2.2" stroke-linejoin="round" stroke-linecap="round" /><polyline points="1408.0,241.0 1408.5,250.5" fill="none" stroke="#909497" stroke-width="1.6" stroke-linejoin="round" stroke-linecap="round" /><polyline points="1380.9,241.4 1374.0,250.4 1365.0,261.7 1356.0,270.8 1350.3,282.0 1356.0,288.9 1344.7,297.9 1333.4,297.9 1328.9,307.0" fill="none" stroke="#c3c6ca" stroke-width="0.9" stroke-linejoin="round" stroke-linecap="round" /><polyline points="1466.8,188.3 1467.5,175.0 1469.0,166.8 1489.4,162.3" fill="none" stroke="#c3c6ca" stroke-width="0.8" stroke-linejoin="round" stroke-linecap="round" /><polyline points="1466.8,188.3 1471.3,194.0 1481.5,198.4 1483.7,212.0 1478.0,225.6 1473.5,232.3 1482.6,238.0" fill="none" stroke="#c3c6ca" stroke-width="0.8" stroke-linejoin="round" stroke-linecap="round" /><polyline points="1369.6,361.8 1380.9,360.7 1392.2,358.0 1408.0,366.3" fill="none" stroke="#a9acb0" stroke-width="1" stroke-linejoin="round" stroke-linecap="round" /><polyline points="1376.3,421.7 1392.2,428.5 1394.4,435.3 1417.0,446.6 1448.7,460.2 1482.6,476.0 1503.0,485.0 1522.0,494.0" fill="none" stroke="#a9acb0" stroke-width="1" stroke-linejoin="round" stroke-linecap="round" /><polyline points="1437.4,430.8 1453.2,433.0 1454.3,443.2 1479.2,447.7 1480.3,442.0 1493.9,437.6" fill="none" stroke="#c3c6ca" stroke-width="0.7" stroke-linejoin="round" stroke-linecap="round" /><polyline points="1454.3,443.2 1457.0,462.0" fill="none" stroke="#c3c6ca" stroke-width="0.7" stroke-linejoin="round" stroke-linecap="round" /><polyline points="1258.2,546.7 1267.3,550.0 1280.9,553.5 1285.4,554.6 1296.7,563.6 1308.0,570.4 1312.5,581.7 1320.4,588.5 1326.0,589.6" fill="none" stroke="#a9acb0" stroke-width="1" stroke-linejoin="round" stroke-linecap="round" /><polyline points="1285.4,554.6 1308.0,536.5 1311.4,528.6 1323.8,532.0 1335.0,539.2" fill="none" stroke="#c3c6ca" stroke-width="0.9" stroke-linejoin="round" stroke-linecap="round" /><polyline points="1305.7,540.0 1312.5,547.8 1329.5,554.2" fill="none" stroke="#c3c6ca" stroke-width="0.8" stroke-linejoin="round" stroke-linecap="round" /><polyline points="1240.2,607.7 1253.7,605.5 1292.2,608.9 1326.0,614.5" fill="none" stroke="#c3c6ca" stroke-width="0.8" stroke-linejoin="round" stroke-linecap="round" /><polyline points="1262.0,694.0 1300.0,691.0 1330.0,700.0 1372.0,688.0" fill="none" stroke="#c3c6ca" stroke-width="0.8" stroke-linejoin="round" stroke-linecap="round" /><polyline points="1222.0,724.0 1262.0,722.0 1290.0,726.0 1296.0,714.0 1305.0,720.0 1330.0,728.0 1360.0,722.0 1374.0,712.0" fill="none" stroke="#c3c6ca" stroke-width="0.8" stroke-linejoin="round" stroke-linecap="round" /><polyline points="1219.0,612.0 1216.0,626.0 1212.0,640.0 1216.0,650.0 1219.0,661.0 1220.0,684.8 1222.4,710.7 1223.5,721.4 1214.9,730.0 1208.0,735.0" fill="none" stroke="#909497" stroke-width="3.6" stroke-linejoin="round" stroke-linecap="round" /><polyline points="1206.0,636.0 1212.0,644.0" fill="none" stroke="#909497" stroke-width="6" stroke-linejoin="round" stroke-linecap="round" /><polygon fill="#909497" points="1204.0,735.0 1210.0,731.0 1218.0,732.0 1236.4,752.0 1212.7,752.0 1207.0,744.0"/><polygon fill="#909497" points="1183.6,646.0 1193.3,643.9 1199.8,652.5 1198.7,665.4 1193.3,661.0 1190.0,654.6 1183.6,653.6"/><ellipse cx="1232.500" cy="596" rx="3.500" ry="4" fill="#f6f6f6"/><polygon fill="#f4f4f4" points="1273.5,431.5 1285.0,430.5 1287.0,437.0 1280.0,435.5"/><polygon fill="#f4f4f4" points="1330.0,433.0 1336.0,434.0 1338.0,440.0 1332.0,438.0"/><polygon fill="#f4f4f4" points="819.8,441.0 826.0,441.5 832.2,445.6 825.0,444.5"/><polygon fill="#f4f4f4" points="842.4,449.0 848.0,447.0 858.2,448.5 855.0,452.5 846.0,453.6"/><polygon fill="#f4f4f4" points="917.0,472.0 921.5,472.0 919.0,474.0"/><polygon fill="#f4f4f4" points="1155.5,600.0 1158.0,599.0 1157.0,602.0"/><polygon fill="#f4f4f4" points="1188.0,600.5 1190.0,600.0 1189.5,602.5"/><path d="M1104 428l10 3 6 5-2 6-6-1-3 3-6-2 3-5-4-3zM1112 443l8 1-4 3z" fill="#909497" opacity=".85"/><polyline points="1057.0,583.0 1051.5,588.1 1036.2,595.7 1010.6,598.3 987.7,590.6 969.8,586.8 954.5,595.7 934.1,598.3 913.7,591.9 903.5,590.6 897.1,598.3 900.9,603.4 911.1,606.0 906.0,612.3 888.1,614.9 875.4,614.1 872.8,621.3 876.7,634.0 871.5,646.8 874.1,657.0 855.0,667.2 857.5,674.9 861.3,687.6 852.4,692.7 849.9,705.5 853.7,710.6 847.3,715.7 865.2,720.8 862.6,728.5 855.0,731.0 856.2,743.8 853.7,752.0" fill="none" stroke="#989ca0" stroke-width="1.3" stroke-linejoin="round" stroke-linecap="round" /><polyline points="1063.0,573.0 1057.0,583.0" fill="none" stroke="#909497" stroke-width="2" stroke-linejoin="round" stroke-linecap="round" /><polyline points="766.6,492.0 769.5,499.0 768.9,505.6 763.0,512.0 757.6,519.0 748.0,521.0 739.5,528.0 737.0,533.0" fill="none" stroke="#a4a7ab" stroke-width="0.9" stroke-linejoin="round" stroke-linecap="round" /><polyline points="823.2,509.0 819.8,519.0 830.0,523.0 841.3,526.0 845.0,538.0 850.3,548.5 860.0,553.0 866.0,559.8 858.0,566.0 852.6,568.9 842.0,573.0 832.2,580.2 824.0,582.0 816.4,587.0 803.0,583.0 791.5,582.4 784.0,577.0 775.7,575.6 768.0,579.0 760.0,580.0 748.6,584.7 737.0,589.2" fill="none" stroke="#a4a7ab" stroke-width="0.9" stroke-linejoin="round" stroke-linecap="round" /><polyline points="737.0,667.0 755.0,668.0 773.0,672.0 784.0,680.0 791.0,685.0 804.0,693.0 811.6,703.0 819.0,713.0 824.0,723.0 842.0,721.0 847.3,713.0" fill="none" stroke="#c9cbce" stroke-width="0.8" stroke-linejoin="round" stroke-linecap="round" /><polyline points="793.0,487.0 795.0,494.0 792.0,500.0" fill="none" stroke="#a4a7ab" stroke-width="0.8" stroke-linejoin="round" stroke-linecap="round" /><polyline points="1031.0,683.0 1020.0,700.0 1005.0,712.0 990.0,735.0 985.0,752.0" fill="none" stroke="#d0d2d5" stroke-width="0.8" stroke-linejoin="round" stroke-linecap="round" /><polyline points="1117.0,674.0 1108.0,690.0 1092.0,700.0 1080.0,718.0 1060.0,728.0 1040.0,745.0" fill="none" stroke="#d0d2d5" stroke-width="0.8" stroke-linejoin="round" stroke-linecap="round" /><polyline points="1160.0,690.0 1140.0,702.0 1110.0,715.0 1085.0,735.0 1075.0,752.0" fill="none" stroke="#d0d2d5" stroke-width="0.8" stroke-linejoin="round" stroke-linecap="round" /><polyline points="840.0,618.0 856.0,621.0 870.0,622.0" fill="none" stroke="#d0d2d5" stroke-width="0.8" stroke-linejoin="round" stroke-linecap="round" /><polyline points="895.0,640.0 905.0,660.0 912.0,690.0" fill="none" stroke="#d0d2d5" stroke-width="0.8" stroke-linejoin="round" stroke-linecap="round" /><polyline points="1110.0,690.0 1104.0,705.0 1106.0,712.0 1126.0,700.0 1138.0,694.0 1140.0,683.0" fill="none" stroke="#d0d2d5" stroke-width="0.8" stroke-linejoin="round" stroke-linecap="round" /><polyline points="1882.0,565.0 1884.0,572.0 1880.5,578.0 1883.0,586.0 1885.5,595.0" fill="none" stroke="#8d9195" stroke-width="2" stroke-linejoin="round" stroke-linecap="round" /><polyline points="1845.0,527.0 1855.0,524.0 1862.0,528.0 1873.0,524.0" fill="none" stroke="#c3c6ca" stroke-width="0.9" stroke-linejoin="round" stroke-linecap="round" /><polyline points="1862.0,528.0 1866.0,540.0 1871.0,546.0" fill="none" stroke="#c3c6ca" stroke-width="0.9" stroke-linejoin="round" stroke-linecap="round" /><polyline points="1838.0,720.0 1850.0,728.0 1858.0,742.0 1865.0,752.0" fill="none" stroke="#c3c6ca" stroke-width="0.9" stroke-linejoin="round" stroke-linecap="round" /><polygon fill="#909497" points="1330.0,301.3 1335.0,300.5 1338.0,305.0 1334.0,309.5 1336.5,315.0 1332.0,318.0 1328.0,311.0"/><polygon fill="#909497" points="1252.5,163.0 1256.0,162.5 1256.5,166.5 1253.0,167.0"/><polygon fill="#909497" points="1260.5,163.0 1266.5,162.2 1267.0,166.0 1264.0,169.0 1261.0,168.5"/><polygon fill="#909497" points="1262.5,170.0 1270.0,170.5 1278.0,162.0 1275.0,162.0 1269.5,167.5"/><polygon fill="#909497" points="1282.0,163.0 1286.0,162.5 1285.5,166.0 1282.5,166.5"/><polygon fill="#909497" points="1280.5,170.5 1282.0,170.0 1283.0,175.0 1281.0,175.0"/><polygon fill="#909497" points="1254.0,170.0 1256.5,170.0 1256.5,176.0 1255.0,176.0"/><path d="M1171 731l6-1 4 3-3 4-6-1z" fill="#909497"/><polygon points="1292.500,706 1305,706 1302,711.500 1297,713" fill="#ece8d6"/>
</svg>
<span class="t" style="left:1244.2px;top:215.6px;font-size:14.5px;line-height:20px;color:#6f6f6f;letter-spacing:-0.29px;text-shadow:0 0 2px #fff,0 0 2px #fff,0 0 1px #fff;">Port-Louis</span>
<span class="t" style="left:1415.9px;top:204.0px;font-size:11px;line-height:15px;color:#6f6f6f;text-shadow:0 0 2px #fff,0 0 2px #fff,0 0 1px #fff;">Pelletan</span>
<span class="t" style="left:1448.7px;top:302.8px;font-size:11px;line-height:15px;color:#6f6f6f;letter-spacing:-0.30px;text-shadow:0 0 2px #fff,0 0 2px #fff,0 0 1px #fff;">Les Mangles</span>
<span class="t" style="left:1361.3px;top:339.0px;font-size:14.5px;line-height:20px;color:#6f6f6f;letter-spacing:-0.40px;text-shadow:0 0 2px #fff,0 0 2px #fff,0 0 1px #fff;">Petit-Canal</span>
<span class="t" style="left:1293.8px;top:448.9px;font-size:12px;line-height:17px;color:#6f6f6f;letter-spacing:-0.19px;text-shadow:0 0 2px #fff,0 0 2px #fff,0 0 1px #fff;">Vieux Bourg</span>
<span class="t" style="left:1467.4px;top:456.0px;font-size:11px;line-height:15px;color:#6f6f6f;letter-spacing:-0.25px;text-shadow:0 0 2px #fff,0 0 2px #fff,0 0 1px #fff;">Richeval</span>
<span class="t" style="left:1439.0px;top:480.8px;font-size:14.5px;line-height:20px;color:#6f6f6f;letter-spacing:0.42px;text-shadow:0 0 2px #fff,0 0 2px #fff,0 0 1px #fff;">Morne-à-l’Eau</span>
<span class="t" style="left:747.4px;top:475.2px;font-size:14.5px;line-height:20px;color:#6f6f6f;transform:scaleX(0.899);transform-origin:0 50%;text-shadow:0 0 2px #fff,0 0 2px #fff,0 0 1px #fff;">Sainte-Rose</span>
<span class="t" style="left:808.5px;top:523.6px;font-size:11px;line-height:15px;color:#6f6f6f;letter-spacing:-0.14px;text-shadow:0 0 2px #fff,0 0 2px #fff,0 0 1px #fff;">Viard</span>
<span class="t" style="left:903.4px;top:560.9px;font-size:11px;line-height:15px;color:#6f6f6f;letter-spacing:-0.04px;text-shadow:0 0 2px #fff,0 0 2px #fff,0 0 1px #fff;">Laurette</span>
<span class="t" style="left:838.1px;top:625.7px;font-size:13.5px;line-height:19px;color:#6f6f6f;letter-spacing:-0.34px;text-shadow:0 0 2px #fff,0 0 2px #fff,0 0 1px #fff;">la Boucan</span>
<span class="t" style="left:952.0px;top:664.3px;font-size:14.5px;line-height:20px;color:#6f6f6f;letter-spacing:-0.43px;text-shadow:0 0 2px #fff,0 0 2px #fff,0 0 1px #fff;">Lamentin</span>
<span class="t" style="left:809.9px;top:679.5px;font-size:11px;line-height:15px;color:#6f6f6f;letter-spacing:0.07px;text-shadow:0 0 2px #fff,0 0 2px #fff,0 0 1px #fff;">Cadet-</span>
<span class="t" style="left:1062.0px;top:670.6px;font-size:15.5px;line-height:22px;color:#555;letter-spacing:-0.35px;text-shadow:0 0 2px #fff,0 0 2px #fff,0 0 1px #fff;">Baie-Mahault</span>
<span class="t" style="left:1303.1px;top:662.9px;font-size:15.5px;line-height:22px;color:#555;transform:scaleX(0.936);transform-origin:0 50%;text-shadow:0 0 2px #fff,0 0 2px #fff,0 0 1px #fff;">Les Abymes</span>
<span class="t" style="left:1233.2px;top:718.7px;font-size:11px;line-height:15px;color:#8a8a8a;transform:scaleX(0.948);transform-origin:0 50%;text-shadow:0 0 2px #fff,0 0 2px #fff,0 0 1px #fff;">GRAND</span>
<span class="t" style="left:1236.8px;top:730.7px;font-size:11px;line-height:15px;color:#8a8a8a;letter-spacing:-0.18px;text-shadow:0 0 2px #fff,0 0 2px #fff,0 0 1px #fff;">CAMP</span>
<span class="t" style="left:1529.7px;top:725.5px;font-size:11px;line-height:15px;color:#6f6f6f;letter-spacing:-0.30px;text-shadow:0 0 2px #fff,0 0 2px #fff,0 0 1px #fff;">Deshauteurs</span>
<span class="t" style="left:1855.0px;top:507.5px;font-size:11px;line-height:15px;color:#6f6f6f;letter-spacing:-0.21px;text-shadow:0 0 2px #fff,0 0 2px #fff,0 0 1px #fff;">Porltar</span>
<span class="t" style="left:1845.0px;top:657.0px;font-size:11px;line-height:15px;color:#6f6f6f;letter-spacing:-0.03px;text-shadow:0 0 2px #fff,0 0 2px #fff,0 0 1px #fff;">laine</span>
<div class="bx" style="left:1854.7px;top:177.1px;width:34.7px;height:64.6px;border:2px solid rgba(0,0,0,.2);border-radius:4px;background:#fff;background-clip:padding-box"></div>
<div class="bx" style="left:1856.7px;top:209.1px;width:30.7px;height:1.0px;background:#ccc"></div>
<span class="t" style="left:1864.500px;top:180px;font-size:25px;line-height:27px;font-weight:700;color:#000">+</span>
<span class="t" style="left:1864.500px;top:210px;font-size:25px;line-height:27px;font-weight:700;color:#000">&#8722;</span>
<div class="bx" style="left:1854.6px;top:252.1px;width:31.6px;height:31.2px;border:2.400px solid #c9cbcd;border-radius:7px;background:#000"></div>
<div class="bx" style="left:1854.6px;top:292.8px;width:31.6px;height:31.9px;border:2.400px solid #c9cbcd;border-radius:7px;background:#000"></div>
<svg class="abs" style="left:1850px;top:250px" width="40" height="80" viewBox="1850 250 40 80"><circle cx="1868.600" cy="265.800" r="5.800" fill="none" stroke="#fff" stroke-width="1.600"/><path d="M1873 270.200l5.400 5.400" stroke="#fff" stroke-width="2" stroke-linecap="round"/><path d="M1860.500 266h4.600l1.500-3 2.400 6 1.600-3h4.500" fill="none" stroke="#fff" stroke-width="1.200" stroke-linejoin="round"/><circle cx="1862.200" cy="301.200" r="4" fill="#2fb356"/><circle cx="1879.500" cy="301.200" r="4" fill="#2fb356"/><circle cx="1872.500" cy="314.400" r="4" fill="#2fb356"/><circle cx="1868.200" cy="304.300" r="4" fill="#d2452d"/><circle cx="1860.300" cy="310.300" r="4" fill="#d2452d"/><circle cx="1879" cy="310.300" r="4" fill="#d2452d"/></svg>
<div class="bx" style="left:1521.8px;top:166.8px;width:322.1px;height:553.6px;background:#000;border-radius:7px;box-shadow:0 3px 14px rgba(0,0,0,.26)"></div>
<div class="abs" style="left:1537.5px;top:186.0px;width:8.3px;height:13px;background:#989898;filter:blur(2.6px)"></div><div class="abs" style="left:1550.0px;top:186.0px;width:49.8px;height:13px;background:#989898;filter:blur(2.6px)"></div><div class="abs" style="left:1604.0px;top:186.0px;width:66.4px;height:13px;background:#989898;filter:blur(2.6px)"></div><div class="abs" style="left:1674.6px;top:186.0px;width:16.6px;height:13px;background:#989898;filter:blur(2.6px)"></div><div class="abs" style="left:1695.4px;top:186.0px;width:3.3px;height:13px;background:#989898;filter:blur(2.6px)"></div><div class="abs" style="left:1702.9px;top:186.0px;width:16.6px;height:13px;background:#989898;filter:blur(2.6px)"></div><div class="abs" style="left:1723.7px;top:186.0px;width:24.9px;height:13px;background:#989898;filter:blur(2.6px)"></div>
<div class="abs" style="left:1537.5px;top:207.5px;width:16.6px;height:13px;background:#8e8e8e;filter:blur(2.6px)"></div><div class="abs" style="left:1558.3px;top:207.5px;width:24.9px;height:13px;background:#8e8e8e;filter:blur(2.6px)"></div><div class="abs" style="left:1587.4px;top:207.5px;width:66.4px;height:13px;background:#8e8e8e;filter:blur(2.6px)"></div><div class="abs" style="left:1658.0px;top:207.5px;width:3.3px;height:13px;background:#8e8e8e;filter:blur(2.6px)"></div><div class="abs" style="left:1665.5px;top:207.5px;width:33.2px;height:13px;background:#8e8e8e;filter:blur(2.6px)"></div><div class="abs" style="left:1702.9px;top:207.5px;width:33.2px;height:13px;background:#8e8e8e;filter:blur(2.6px)"></div><div class="abs" style="left:1740.3px;top:207.5px;width:78.9px;height:13px;background:#8e8e8e;filter:blur(2.6px)"></div>
<div class="bx" style="left:1530.0px;top:220.6px;width:308.0px;height:5.9px;background:#000"></div>
<div class="bx" style="left:1536.9px;top:227.1px;width:292.3px;height:1.5px;background:#dcdcdc"></div>
<div class="bx" style="left:1536.9px;top:662.1px;width:292.3px;height:1.6px;background:#e8e8e8"></div>
<div class="bx" style="left:1536.9px;top:406.0px;width:292.3px;height:24.9px;background:#858389;border:1px solid #5c6b8c;border-radius:4px"></div>
<div class="bx" style="left:1574.2px;top:674.0px;width:80.5px;height:31.9px;background:#264e8a;border-radius:4px"></div>
<div class="bx" style="left:1728.0px;top:674.0px;width:64.0px;height:31.9px;background:#264e8a;border-radius:4px"></div>
<svg class="abs" style="left:1515px;top:160px" width="340" height="570" viewBox="1515 160 340 570"><path d="M1817.200 187.300l11 11M1828.200 187.300l-11 11" stroke="#fff" stroke-width="1.500" stroke-linecap="round"/><path d="M1805 415.500h10l-5 5z" fill="#fff"/><g transform="translate(1747.3,677.3) scale(1.043)"><path fill="#fff" d="M19.140 12.940c.040-.300.060-.610.060-.940 0-.320-.020-.640-.070-.940l2.030-1.580a.490.490 0 0 0 .120-.610l-1.920-3.320a.488.488 0 0 0-.590-.220l-2.390.960c-.500-.380-1.030-.700-1.620-.940l-.360-2.540a.484.484 0 0 0-.480-.410h-3.840c-.240 0-.430.170-.470.410l-.360 2.540c-.590.240-1.130.570-1.620.940l-2.390-.960c-.220-.080-.470 0-.590.220L2.740 8.870c-.120.210-.08.470.12.610l2.030 1.580c-.050.300-.090.630-.090.940s.020.640.070.940l-2.030 1.580a.490.490 0 0 0-.120.610l1.920 3.320c.120.220.370.290.590.220l2.390-.960c.500.380 1.030.700 1.620.940l.360 2.540c.050.240.240.410.480.410h3.840c.240 0 .440-.170.470-.410l.360-2.540c.590-.240 1.130-.560 1.620-.940l2.390.960c.220.080.470 0 .590-.220l1.920-3.320c.120-.220.070-.470-.120-.610l-2.010-1.580zM12 15.600c-1.980 0-3.600-1.620-3.600-3.600s1.620-3.600 3.600-3.600 3.600 1.620 3.600 3.600-1.620 3.600-3.600 3.600z"/></g></svg>
<span class="t m" style="left:45.5px;top:19.7px;font-size:15px;line-height:21px;color:#626875;letter-spacing:-0.21px;">Sites</span>
<span class="t m" style="left:45.5px;top:64.2px;font-size:15px;line-height:21px;color:#626875;letter-spacing:-0.03px;">Trends</span>
<span class="t m" style="left:45.5px;top:108.2px;font-size:15px;line-height:21px;color:#626875;letter-spacing:0.02px;">Threats</span>
<span class="t m" style="left:44.5px;top:152.2px;font-size:15px;line-height:21px;color:#626875;letter-spacing:0.33px;">Map</span>
<span class="t m" style="left:44.5px;top:196.2px;font-size:15px;line-height:21px;color:#626875;">Reports</span>
<span class="t m" style="left:45.5px;top:240.2px;font-size:15px;line-height:21px;color:#626875;letter-spacing:0.01px;">Account Management</span>
<span class="t m" style="left:45.5px;top:284.2px;font-size:15px;line-height:21px;color:#626875;letter-spacing:0.13px;">Alerts</span>
<span class="t m" style="left:45.5px;top:328.2px;font-size:15px;line-height:21px;color:#626875;">Audit Logs *</span>
<span class="t m" style="left:45.5px;top:372.2px;font-size:15px;line-height:21px;color:#626875;letter-spacing:0.10px;">S/W Configuration</span>
<span class="t m" style="left:44.5px;top:416.2px;font-size:15px;line-height:21px;color:#626875;letter-spacing:0.16px;">Inventory</span>
<span class="t m" style="left:44.5px;top:460.2px;font-size:15px;line-height:21px;color:#626875;letter-spacing:0.16px;">Hub</span>
<span class="t m" style="left:44.5px;top:504.2px;font-size:15px;line-height:21px;color:#626875;letter-spacing:0.22px;">Kontrol</span>
<span class="t m" style="left:45.5px;top:548.2px;font-size:15px;line-height:21px;color:#626875;letter-spacing:0.02px;">Content Filter *</span>
<span class="t" style="left:45.5px;top:593.0px;font-size:14.5px;line-height:20px;color:#10123f;font-weight:700;letter-spacing:-0.45px;">Starlink</span>
<span class="t m" style="left:45.5px;top:636.2px;font-size:15px;line-height:21px;color:#626875;letter-spacing:0.06px;">Captive portal</span>
<span class="t m" style="left:45.5px;top:680.2px;font-size:15px;line-height:21px;color:#626875;letter-spacing:0.20px;">Topology *</span>
<span class="t" style="left:222.4px;top:12.1px;font-size:15px;line-height:21px;color:#7d828d;letter-spacing:0.01px;">Organization</span>
<span class="t" style="left:517.9px;top:12.1px;font-size:15px;line-height:21px;color:#7d828d;letter-spacing:0.21px;">Accounts</span>
<span class="t m2" style="left:596.8px;top:12.0px;font-size:15px;line-height:21px;color:#363a4b;letter-spacing:0.93px;">All Accounts</span>
<span class="t" style="left:791.4px;top:12.1px;font-size:15px;line-height:21px;color:#7d828d;letter-spacing:-0.07px;">Service Line</span>
<span class="t m2" style="left:888.9px;top:12.0px;font-size:15px;line-height:21px;color:#363a4b;letter-spacing:0.79px;">All Service Lines</span>
<span class="t" style="left:221.4px;top:64.3px;font-size:15px;line-height:21px;color:#2a4686;font-weight:700;letter-spacing:-0.09px;">Dashboard</span>
<span class="t m" style="left:315.0px;top:64.2px;font-size:15px;line-height:21px;color:#8a8e99;letter-spacing:0.47px;">DashboardV2 *</span>
<span class="t m" style="left:438.8px;top:64.2px;font-size:15px;line-height:21px;color:#8a8e99;letter-spacing:0.45px;">Usage</span>
<span class="t m" style="left:499.6px;top:64.2px;font-size:15px;line-height:21px;color:#8a8e99;letter-spacing:0.32px;">UsageV2 *</span>
<span class="t m" style="left:590.6px;top:64.2px;font-size:15px;line-height:21px;color:#8a8e99;letter-spacing:0.47px;">Plans</span>
<span class="t m" style="left:644.5px;top:64.2px;font-size:15px;line-height:21px;color:#8a8e99;letter-spacing:0.32px;">Plan Usage</span>
<span class="t m" style="left:741.2px;top:64.2px;font-size:15px;line-height:21px;color:#8a8e99;letter-spacing:0.05px;">Quota</span>
<span class="t m" style="left:798.4px;top:64.2px;font-size:15px;line-height:21px;color:#8a8e99;letter-spacing:0.74px;">Insights</span>
<span class="t m" style="left:871.4px;top:64.2px;font-size:15px;line-height:21px;color:#8a8e99;letter-spacing:0.48px;">Service Account</span>
<span class="t m" style="left:1004.0px;top:64.2px;font-size:15px;line-height:21px;color:#8a8e99;letter-spacing:0.40px;">Service Line</span>
<span class="t m" style="left:1106.6px;top:64.2px;font-size:15px;line-height:21px;color:#8a8e99;letter-spacing:0.49px;">User Terminals</span>
<span class="t m" style="left:1229.8px;top:64.2px;font-size:15px;line-height:21px;color:#8a8e99;letter-spacing:0.47px;">Audit Logs</span>
<span class="t" style="left:292.8px;top:114.0px;font-size:14px;line-height:20px;color:#a3a3a3;letter-spacing:0.22px;">Type something</span>
<span class="t" style="left:221.0px;top:171.0px;font-size:14px;line-height:20px;color:#666a70;transform:scaleX(0.963);transform-origin:0 50%;">25</span>
<span class="t" style="left:275.0px;top:172.5px;font-size:14.5px;line-height:20px;color:#666a70;letter-spacing:0.37px;">Items from</span>
<span class="t" style="left:353.5px;top:170.5px;font-size:14px;line-height:20px;color:#666a70;">1</span>
<span class="t" style="left:393.4px;top:172.5px;font-size:14.5px;line-height:20px;color:#666a70;letter-spacing:0.31px;">of 308 pages</span>
<span class="t" style="left:590.3px;top:172.5px;font-size:14.5px;line-height:20px;color:#666a70;letter-spacing:0.17px;">1-25 of 7697 items</span>
<span class="t" style="left:236.6px;top:208.8px;font-size:11px;line-height:15px;color:#7f8791;font-weight:700;font-family:'DejaVu Sans Mono','Liberation Mono',monospace;letter-spacing:1.00px;">SERVICE</span>
<span class="t" style="left:235.6px;top:224.7px;font-size:11px;line-height:15px;color:#7f8791;font-weight:700;font-family:'DejaVu Sans Mono','Liberation Mono',monospace;letter-spacing:1.00px;">LINE</span>
<span class="t" style="left:416.5px;top:208.8px;font-size:11px;line-height:15px;color:#7f8791;font-weight:700;font-family:'DejaVu Sans Mono','Liberation Mono',monospace;letter-spacing:1.00px;">USAGE</span>
<span class="t" style="left:414.5px;top:224.7px;font-size:11px;line-height:15px;color:#7f8791;font-weight:700;font-family:'DejaVu Sans Mono','Liberation Mono',monospace;letter-spacing:1.00px;">(GB)</span>
<span class="t" style="left:506.7px;top:208.8px;font-size:11px;line-height:15px;color:#7f8791;font-weight:700;font-family:'DejaVu Sans Mono','Liberation Mono',monospace;letter-spacing:1.00px;">PLAN</span>
<span class="t" style="left:504.7px;top:224.7px;font-size:11px;line-height:15px;color:#7f8791;font-weight:700;font-family:'DejaVu Sans Mono','Liberation Mono',monospace;letter-spacing:1.00px;">(GB)</span>
<span class="t" style="left:601.3px;top:217.3px;font-size:11px;line-height:15px;color:#7f8791;font-weight:700;font-family:'DejaVu Sans Mono','Liberation Mono',monospace;letter-spacing:1.00px;">STATUS</span>
<span class="t m" style="left:416.9px;top:263.6px;font-size:12px;line-height:17px;color:#3d3d3d;letter-spacing:1.13px;">14037</span>
<span class="t m" style="left:506.9px;top:263.6px;font-size:12px;line-height:17px;color:#3d3d3d;letter-spacing:1.91px;">400000</span>
<span class="t" style="left:634.9px;top:263.3px;font-size:12px;line-height:17px;color:#3d3d3d;transform:scaleX(0.951);transform-origin:0 50%;">10</span>
<span class="t" style="left:668.0px;top:263.3px;font-size:12px;line-height:17px;color:#3d3d3d;">0</span>
<span class="t m" style="left:416.9px;top:304.1px;font-size:12px;line-height:17px;color:#3d3d3d;letter-spacing:1.66px;">2959</span>
<span class="t m" style="left:506.9px;top:304.1px;font-size:12px;line-height:17px;color:#3d3d3d;letter-spacing:1.43px;">10000</span>
<span class="t" style="left:634.9px;top:303.8px;font-size:12px;line-height:17px;color:#3d3d3d;">2</span>
<span class="t" style="left:668.0px;top:303.8px;font-size:12px;line-height:17px;color:#3d3d3d;">0</span>
<span class="t m" style="left:416.9px;top:339.3px;font-size:12px;line-height:17px;color:#3d3d3d;letter-spacing:1.66px;">2922</span>
<span class="t m" style="left:506.9px;top:339.3px;font-size:12px;line-height:17px;color:#3d3d3d;letter-spacing:1.43px;">10000</span>
<span class="t" style="left:634.9px;top:339.0px;font-size:12px;line-height:17px;color:#3d3d3d;">1</span>
<span class="t" style="left:668.0px;top:339.0px;font-size:12px;line-height:17px;color:#3d3d3d;">0</span>
<span class="t m" style="left:416.9px;top:374.4px;font-size:12px;line-height:17px;color:#3d3d3d;letter-spacing:1.66px;">2894</span>
<span class="t m" style="left:506.9px;top:374.4px;font-size:12px;line-height:17px;color:#3d3d3d;letter-spacing:1.66px;">2000</span>
<span class="t" style="left:634.9px;top:374.2px;font-size:12px;line-height:17px;color:#3d3d3d;">1</span>
<span class="t" style="left:668.0px;top:374.2px;font-size:12px;line-height:17px;color:#3d3d3d;">0</span>
<span class="t m" style="left:416.9px;top:409.6px;font-size:12px;line-height:17px;color:#3d3d3d;letter-spacing:0.94px;">2313</span>
<span class="t m" style="left:506.9px;top:409.6px;font-size:12px;line-height:17px;color:#3d3d3d;letter-spacing:1.43px;">10000</span>
<span class="t" style="left:634.9px;top:409.3px;font-size:12px;line-height:17px;color:#3d3d3d;">1</span>
<span class="t" style="left:668.0px;top:409.3px;font-size:12px;line-height:17px;color:#3d3d3d;">0</span>
<span class="t m" style="left:416.9px;top:444.8px;font-size:12px;line-height:17px;color:#3d3d3d;letter-spacing:0.94px;">2160</span>
<span class="t m" style="left:506.9px;top:444.8px;font-size:12px;line-height:17px;color:#3d3d3d;letter-spacing:1.66px;">5000</span>
<span class="t" style="left:634.9px;top:444.5px;font-size:12px;line-height:17px;color:#3d3d3d;">2</span>
<span class="t" style="left:668.0px;top:444.5px;font-size:12px;line-height:17px;color:#3d3d3d;">0</span>
<span class="t m" style="left:416.9px;top:480.0px;font-size:12px;line-height:17px;color:#3d3d3d;letter-spacing:0.94px;">2129</span>
<span class="t m" style="left:506.9px;top:480.0px;font-size:12px;line-height:17px;color:#3d3d3d;letter-spacing:1.66px;">2000</span>
<span class="t" style="left:634.9px;top:479.7px;font-size:12px;line-height:17px;color:#3d3d3d;">1</span>
<span class="t" style="left:668.0px;top:479.7px;font-size:12px;line-height:17px;color:#3d3d3d;">0</span>
<span class="t m" style="left:416.9px;top:515.2px;font-size:12px;line-height:17px;color:#3d3d3d;letter-spacing:0.94px;">1964</span>
<span class="t m" style="left:506.9px;top:515.2px;font-size:12px;line-height:17px;color:#3d3d3d;letter-spacing:1.52px;">Unlimited</span>
<span class="t" style="left:634.9px;top:514.9px;font-size:12px;line-height:17px;color:#3d3d3d;">2</span>
<span class="t" style="left:668.0px;top:514.9px;font-size:12px;line-height:17px;color:#3d3d3d;">0</span>
<span class="t m" style="left:416.9px;top:550.4px;font-size:12px;line-height:17px;color:#3d3d3d;letter-spacing:0.94px;">1955</span>
<span class="t m" style="left:506.9px;top:550.4px;font-size:12px;line-height:17px;color:#3d3d3d;">0</span>
<span class="t" style="left:634.9px;top:550.1px;font-size:12px;line-height:17px;color:#3d3d3d;">1</span>
<span class="t" style="left:668.0px;top:550.1px;font-size:12px;line-height:17px;color:#3d3d3d;">0</span>
<span class="t m" style="left:416.9px;top:585.5px;font-size:12px;line-height:17px;color:#3d3d3d;letter-spacing:0.23px;">1851</span>
<span class="t m" style="left:506.9px;top:585.5px;font-size:12px;line-height:17px;color:#3d3d3d;letter-spacing:1.52px;">Unlimited</span>
<span class="t" style="left:634.9px;top:585.2px;font-size:12px;line-height:17px;color:#3d3d3d;">2</span>
<span class="t" style="left:668.0px;top:585.2px;font-size:12px;line-height:17px;color:#3d3d3d;">0</span>
<span class="t m" style="left:416.9px;top:620.7px;font-size:12px;line-height:17px;color:#3d3d3d;letter-spacing:0.94px;">1780</span>
<span class="t m" style="left:506.9px;top:620.7px;font-size:12px;line-height:17px;color:#3d3d3d;letter-spacing:1.52px;">Unlimited</span>
<span class="t" style="left:634.9px;top:620.4px;font-size:12px;line-height:17px;color:#3d3d3d;">2</span>
<span class="t" style="left:668.0px;top:620.4px;font-size:12px;line-height:17px;color:#3d3d3d;">0</span>
<span class="t m" style="left:416.9px;top:655.9px;font-size:12px;line-height:17px;color:#3d3d3d;letter-spacing:0.94px;">1695</span>
<span class="t m" style="left:506.9px;top:655.9px;font-size:12px;line-height:17px;color:#3d3d3d;letter-spacing:1.66px;">6000</span>
<span class="t" style="left:634.9px;top:655.6px;font-size:12px;line-height:17px;color:#3d3d3d;">1</span>
<span class="t" style="left:668.0px;top:655.6px;font-size:12px;line-height:17px;color:#3d3d3d;">1</span>
<span class="t m" style="left:416.9px;top:691.1px;font-size:12px;line-height:17px;color:#3d3d3d;letter-spacing:0.94px;">1572</span>
<span class="t m" style="left:506.9px;top:691.1px;font-size:12px;line-height:17px;color:#3d3d3d;letter-spacing:1.52px;">Unlimited</span>
<span class="t" style="left:634.9px;top:690.8px;font-size:12px;line-height:17px;color:#3d3d3d;">2</span>
<span class="t" style="left:668.0px;top:690.8px;font-size:12px;line-height:17px;color:#3d3d3d;">0</span>
<span class="t m" style="left:416.9px;top:726.2px;font-size:12px;line-height:17px;color:#3d3d3d;letter-spacing:0.94px;">1548</span>
<span class="t m" style="left:506.9px;top:726.2px;font-size:12px;line-height:17px;color:#3d3d3d;letter-spacing:1.66px;">6000</span>
<span class="t" style="left:634.9px;top:726.0px;font-size:12px;line-height:17px;color:#3d3d3d;">1</span>
<span class="t" style="left:668.0px;top:726.0px;font-size:12px;line-height:17px;color:#3d3d3d;">0</span>
<span class="t m2" style="left:234.2px;top:260.5px;font-size:18px;line-height:25px;color:#393ec2;font-weight:700;transform:scaleX(0.874);transform-origin:0 50%;">Service Line 1</span>
<span class="t m2" style="left:233.0px;top:298.7px;font-size:18px;line-height:25px;color:#393ec2;font-weight:700;transform:scaleX(0.883);transform-origin:0 50%;">Service Line 2</span>
<span class="t" style="left:1537.6px;top:230.3px;font-size:14px;line-height:20px;color:#fff;font-weight:700;letter-spacing:0.67px;">SL Number: SL-DF-8903082-30228-53</span>
<span class="t" style="left:1537.6px;top:252.2px;font-size:14px;line-height:20px;color:#fff;font-weight:700;letter-spacing:0.20px;">Plan: 5 TB DUAL Subscription OP.. (43.2%)</span>
<span class="t" style="left:1537.1px;top:273.9px;font-size:14px;line-height:20px;color:#fff;letter-spacing:-0.07px;">Usage</span>
<span class="t" style="right:72.1px;top:273.9px;font-size:14px;line-height:20px;color:#fff;letter-spacing:-0.05px;">2160 GB</span>
<span class="t" style="left:1538.1px;top:295.1px;font-size:14px;line-height:20px;color:#fff;letter-spacing:-0.07px;">• Local Priority</span>
<span class="t" style="right:72.1px;top:295.1px;font-size:14px;line-height:20px;color:#fff;letter-spacing:-0.05px;">0 GB</span>
<span class="t" style="left:1538.1px;top:316.1px;font-size:14px;line-height:20px;color:#fff;letter-spacing:-0.07px;">• Global Priority</span>
<span class="t" style="right:72.1px;top:316.1px;font-size:14px;line-height:20px;color:#fff;letter-spacing:-0.05px;">0 GB</span>
<span class="t" style="left:1538.1px;top:337.1px;font-size:14px;line-height:20px;color:#fff;letter-spacing:-0.07px;">• Mobile Priority</span>
<span class="t" style="right:72.1px;top:337.1px;font-size:14px;line-height:20px;color:#fff;letter-spacing:-0.05px;">2160 GB</span>
<span class="t" style="left:1538.1px;top:358.2px;font-size:14px;line-height:20px;color:#fff;letter-spacing:-0.07px;">• Other data</span>
<span class="t" style="right:72.1px;top:358.2px;font-size:14px;line-height:20px;color:#fff;letter-spacing:-0.05px;">0 GB</span>
<span class="t" style="left:1538.1px;top:379.4px;font-size:14px;line-height:20px;color:#fff;letter-spacing:-0.07px;">• Legacy Plans</span>
<span class="t" style="right:72.1px;top:379.4px;font-size:14px;line-height:20px;color:#fff;letter-spacing:-0.05px;">0 GB</span>
<span class="t" style="left:1538.1px;top:433.3px;font-size:14px;line-height:20px;color:#fff;letter-spacing:-0.07px;">Terminal ID</span>
<span class="t" style="right:72.7px;top:433.3px;font-size:14px;line-height:20px;color:#fff;letter-spacing:-0.05px;">ut01000000-00000000-008dc081</span>
<span class="t" style="left:1538.1px;top:456.9px;font-size:14px;line-height:20px;color:#fff;letter-spacing:-0.07px;">Obstruction</span>
<span class="t" style="right:72.0px;top:456.9px;font-size:14px;line-height:20px;color:#fff;letter-spacing:-0.05px;">0.00 %</span>
<span class="t" style="left:1537.1px;top:479.7px;font-size:14px;line-height:20px;color:#fff;letter-spacing:-0.07px;">Downlink</span>
<span class="t" style="right:72.5px;top:479.7px;font-size:14px;line-height:20px;color:#fff;letter-spacing:-0.05px;">3.94 Mbps</span>
<span class="t" style="left:1537.1px;top:502.7px;font-size:14px;line-height:20px;color:#fff;letter-spacing:-0.07px;">Uplink</span>
<span class="t" style="right:72.5px;top:502.7px;font-size:14px;line-height:20px;color:#fff;letter-spacing:-0.05px;">0.36 Mbps</span>
<span class="t" style="left:1538.1px;top:525.8px;font-size:14px;line-height:20px;color:#fff;letter-spacing:-0.07px;">Signal Quality</span>
<span class="t" style="right:72.0px;top:525.8px;font-size:14px;line-height:20px;color:#fff;letter-spacing:-0.05px;">100.00 %</span>
<span class="t" style="left:1537.1px;top:548.7px;font-size:14px;line-height:20px;color:#fff;letter-spacing:-0.07px;">Ping Drop Rate</span>
<span class="t" style="right:72.0px;top:548.7px;font-size:14px;line-height:20px;color:#fff;letter-spacing:-0.05px;">0.00 %</span>
<span class="t" style="left:1537.1px;top:571.7px;font-size:14px;line-height:20px;color:#fff;letter-spacing:-0.07px;">Latency</span>
<span class="t" style="right:72.5px;top:571.7px;font-size:14px;line-height:20px;color:#fff;letter-spacing:-0.05px;">35.00 ms</span>
<span class="t" style="left:1537.1px;top:594.7px;font-size:14px;line-height:20px;color:#fff;letter-spacing:-0.07px;">Uptime</span>
<span class="t" style="right:72.1px;top:594.7px;font-size:14px;line-height:20px;color:#fff;letter-spacing:-0.05px;">1H 55M 56S</span>
<span class="t" style="left:1537.1px;top:617.7px;font-size:14px;line-height:20px;color:#fff;letter-spacing:-0.07px;">Last Online</span>
<span class="t" style="right:72.7px;top:617.7px;font-size:14px;line-height:20px;color:#fff;letter-spacing:-0.05px;">2026-01-08 19:08:42</span>
<span class="t" style="left:1538.1px;top:640.3px;font-size:14px;line-height:20px;color:#fff;letter-spacing:-0.07px;">Coordinates</span>
<span class="t" style="right:73.2px;top:640.3px;font-size:14px;line-height:20px;color:#fff;letter-spacing:-0.05px;">16° 7.40' N, 61° 49.11' W</span>
<span class="t" style="left:1550.6px;top:407.0px;font-size:16px;line-height:22px;color:#26262b;letter-spacing:0.10px;">KITP00221345</span>
<span class="t" style="left:1584.0px;top:679.9px;font-size:13px;line-height:18px;color:#fff;font-weight:700;letter-spacing:-0.10px;">INSIGHTS</span>
</body></html>
